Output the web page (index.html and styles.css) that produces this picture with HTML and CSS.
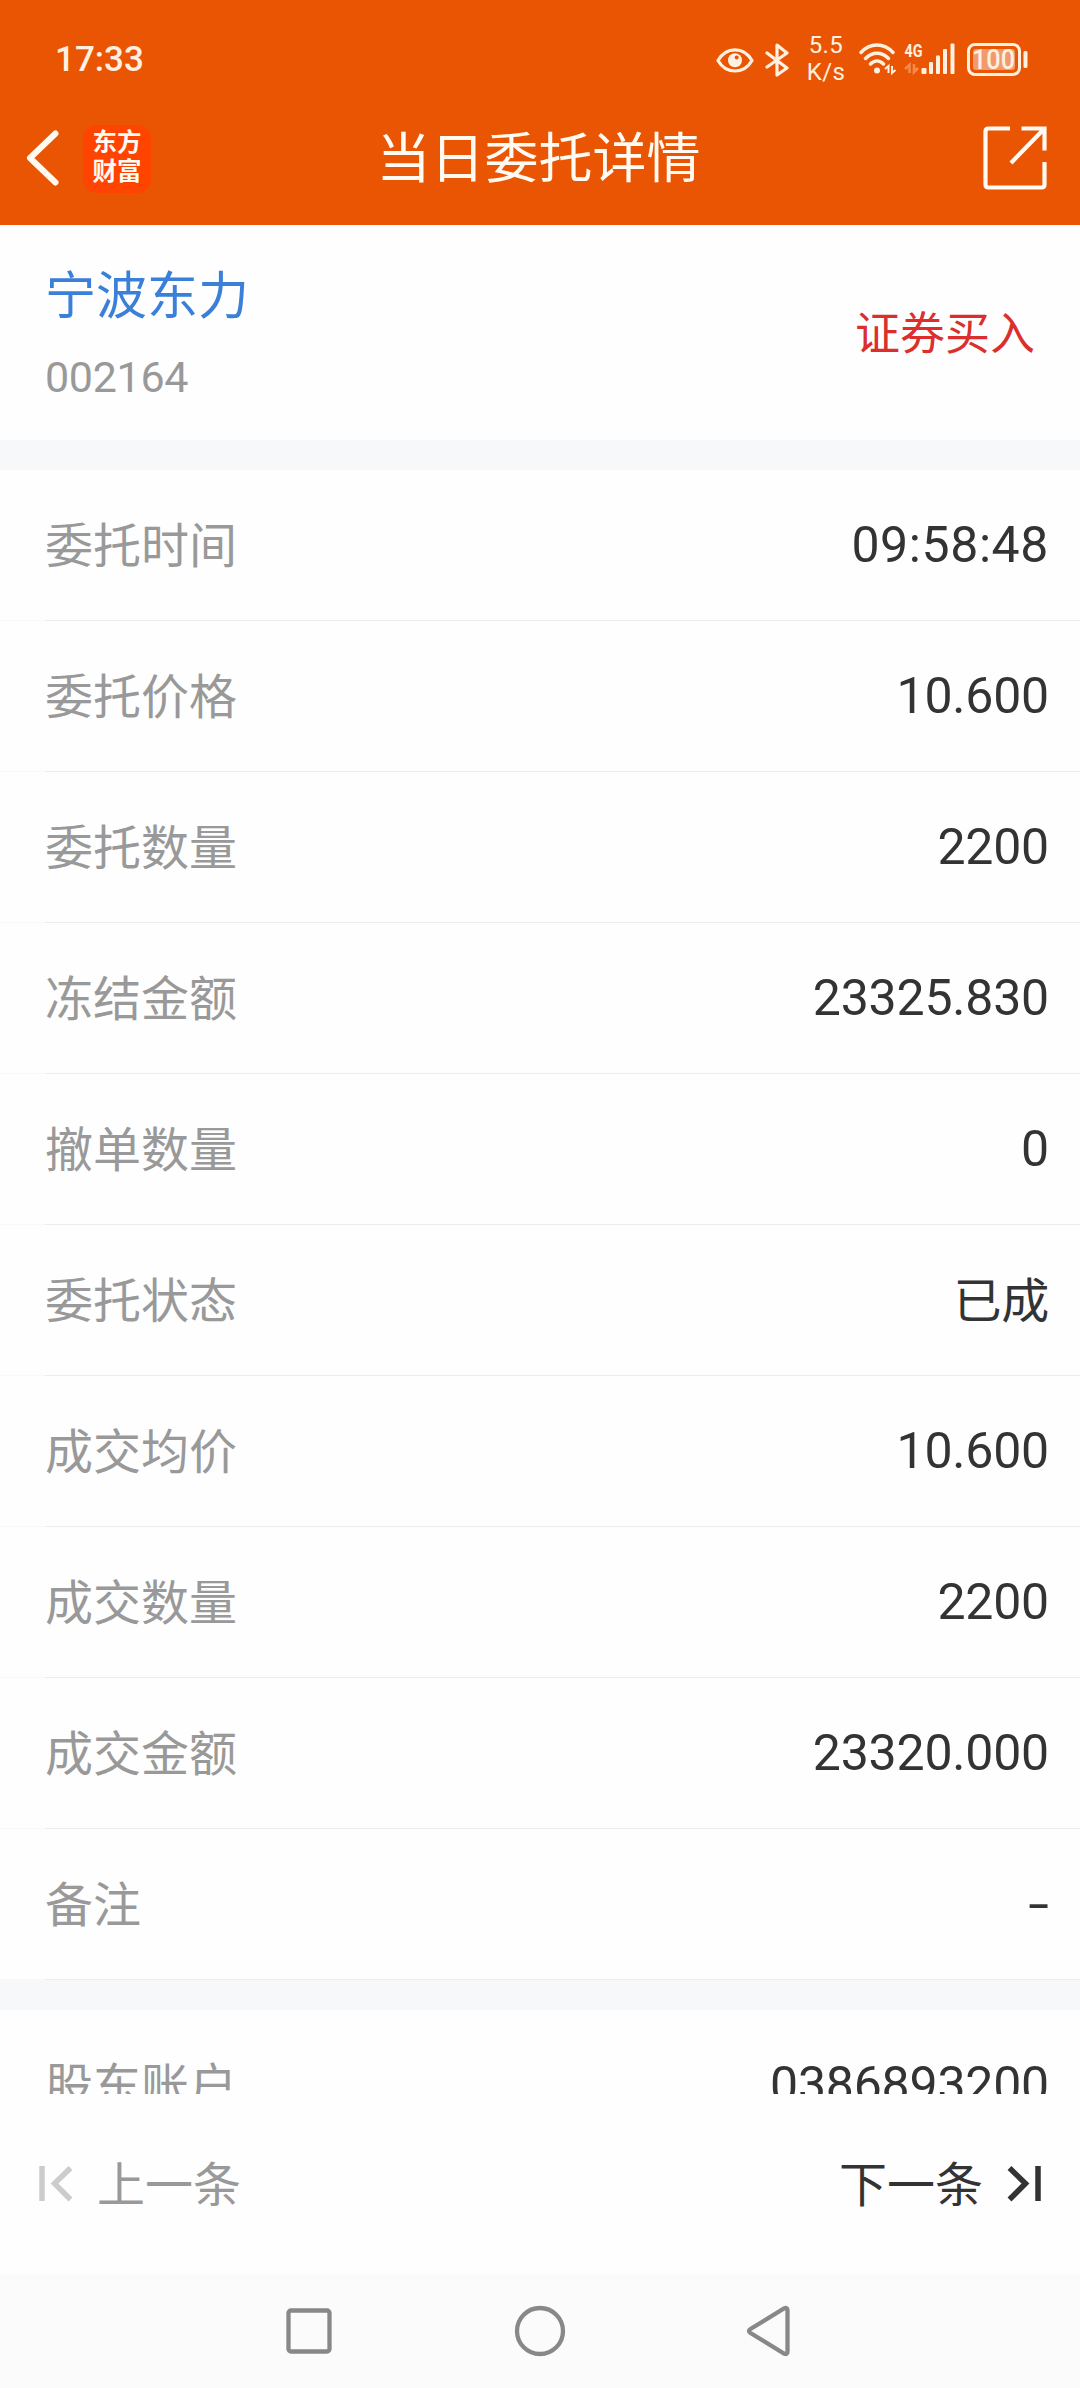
FILE: index.html
```html
<!DOCTYPE html>
<html lang="zh-CN">
<head>
  <meta charset="UTF-8">
  <meta name="viewport" content="width=device-width, initial-scale=1.0">
  <title>当日委托详情</title>
  <link rel="stylesheet" href="styles.css">
</head>
<body>
  <header class="header">
    <div class="status-bar">
      <span class="clock">17:33</span>
      <div class="status-icons">
        <svg class="icon-eye" width="38" height="40" viewBox="0 0 38 40" fill="none" stroke="#fff0e0" stroke-width="3.2">
          <path d="M2 21.500C6 14.500 12 10.800 19 10.800S32 14.500 36 21.500C32 28.500 26 32 19 32S6 28.500 2 21.500Z"/>
          <circle cx="19" cy="21.300" r="7" fill="#fff0e0" stroke="none"/>
          <circle cx="20.700" cy="18.500" r="2" fill="#ea5504" stroke="none"/>
        </svg>
        <svg class="icon-bt" width="24" height="40" viewBox="0 0 24 40" fill="none" stroke="#fff0e0" stroke-width="3.2" stroke-linejoin="round" stroke-linecap="round">
          <path d="M2 14L22 29L12 36V6L22 14L2 28"/>
        </svg>
        <div class="speed"><span>5.5</span><span>K/s</span></div>
        <svg class="icon-wifi" width="38" height="40" viewBox="0 0 38 40" fill="none" stroke="#fff0e0" stroke-width="3.4" stroke-linecap="round">
          <path d="M2 13.500C11 3.500 25 3.500 34 13.500M6.500 19.500C13 12.500 23 12.500 29.500 19.500M11.500 25C15.500 21 20.500 21 24.500 25"/>
          <circle cx="18" cy="31.500" r="3" fill="#fff0e0" stroke="none"/>
          <path d="M26 30L29.500 27V34M33 27V34L36.500 31" stroke-width="2" stroke-linecap="butt"/>
        </svg>
        <svg class="icon-signal" width="52" height="40" viewBox="0 0 52 40" fill="#fff0e0">
          <text class="net-type" x="0.500" y="17.500" textLength="18" lengthAdjust="spacingAndGlyphs">4G</text>
          <path d="M1 30L5.500 26V34M10 25V33L14 29" fill="none" stroke="#f58a4c" stroke-width="2.600"/>
          <rect x="17.500" y="29" width="5" height="6" rx="1"/>
          <rect x="25" y="23" width="4" height="12" rx="1"/>
          <rect x="32" y="16.500" width="4" height="18.500" rx="1"/>
          <rect x="39" y="10" width="4" height="25" rx="1"/>
          <rect x="46.500" y="4.500" width="4" height="30.500" rx="1"/>
        </svg>
        <svg class="icon-battery" width="61" height="40" viewBox="0 0 61 40">
          <rect x="1.500" y="5.500" width="51" height="30" rx="6.500" fill="none" stroke="#fff0e0" stroke-width="3"/>
          <rect x="6" y="10" width="42" height="21" rx="3" fill="#f29a6c"/>
          <rect x="56.500" y="12" width="4" height="17" rx="1.500" fill="#fff0e0"/>
          <text class="battery-text" x="5" y="30" textLength="43" lengthAdjust="spacingAndGlyphs">100</text>
        </svg>
      </div>
    </div>
    <div class="title-bar">
      <div class="title-left">
        <svg width="36" height="60" viewBox="0 0 36 60" fill="none" stroke="#fffaf2" stroke-width="6" stroke-linecap="round" stroke-linejoin="round">
          <path d="M31.500 4.500L6 29L31.500 53.500"/>
        </svg>
        <div class="logo"><span>东方</span><span>财富</span></div>
      </div>
      <h1 class="title">当日委托详情</h1>
      <svg class="icon-share" width="64" height="64" viewBox="0 0 64 64" fill="none" stroke="#fffaf2" stroke-width="4.200">
        <path d="M27 2.500H5.500Q2.500 2.500 2.500 5.500V58.500Q2.500 61.500 5.500 61.500H58.500Q61.500 61.500 61.500 58.500V36M38.500 2.500H61.500V24.500M61 3L28 37"/>
      </svg>
    </div>
  </header>

  <main class="content">
    <section class="stock">
      <div>
        <div class="stock-name">宁波东力</div>
        <div class="stock-code">002164</div>
      </div>
      <span class="trade-type">证券买入</span>
    </section>

    <ul class="list">
      <li class="row"><span class="label">委托时间</span><span class="value time">09:58:48</span></li>
      <li class="row"><span class="label">委托价格</span><span class="value">10.600</span></li>
      <li class="row"><span class="label">委托数量</span><span class="value">2200</span></li>
      <li class="row"><span class="label">冻结金额</span><span class="value">23325.830</span></li>
      <li class="row"><span class="label">撤单数量</span><span class="value">0</span></li>
      <li class="row"><span class="label">委托状态</span><span class="value text">已成</span></li>
      <li class="row"><span class="label">成交均价</span><span class="value">10.600</span></li>
      <li class="row"><span class="label">成交数量</span><span class="value">2200</span></li>
      <li class="row"><span class="label">成交金额</span><span class="value">23320.000</span></li>
      <li class="row"><span class="label">备注</span><span class="value dash">-</span></li>
    </ul>

    <ul class="list">
      <li class="row"><span class="label">股东账户</span><span class="value">0386893200</span></li>
    </ul>
  </main>

  <div class="pager">
    <div class="pager-btn prev">
      <svg width="34" height="36" viewBox="0 0 34 36" fill="none" stroke="#ccc" stroke-width="6">
        <path d="M3 0V35M31.500 2L15.500 17.500L31.500 33.500" stroke-width="5.500"/>
      </svg>
      <span class="pager-text">上一条</span>
    </div>
    <div class="pager-btn next">
      <span class="pager-text">下一条</span>
      <svg width="34" height="36" viewBox="0 0 34 36" fill="none" stroke="#333" stroke-width="5.500">
        <path d="M31 0V35M2.500 2L18.500 17.500L2.500 33.500"/>
      </svg>
    </div>
  </div>

  <nav class="nav-bar">
    <svg width="52" height="52" viewBox="0 0 52 52"><rect x="5.500" y="5.500" width="41" height="41" rx="2.500"/></svg>
    <svg width="52" height="52" viewBox="0 0 52 52"><circle cx="26" cy="26" r="23"/></svg>
    <svg width="52" height="52" viewBox="0 0 52 52"><path d="M4 26Q4 25 5.500 24L39 3.500Q42.500 2 42.500 5V47Q42.500 50 39 48.500L5.500 28Q4 27 4 26Z"/></svg>
  </nav>
</body>
</html>
```

FILE: styles.css
```css
* {
  box-sizing: border-box;
}

body {
  margin: 0;
  height: 2388px;
  display: flex;
  flex-direction: column;
  overflow: hidden;
  background-color: #fefefe;
  font-family: Roboto, "Noto Sans CJK SC", sans-serif;
  color: #333;
}

svg {
  display: block;
  flex: none;
}

.header {
  height: 225px;
  flex: none;
  background-color: #ea5504;
  color: #fffaf2;
}

.status-bar {
  height: 92px;
  padding: 26px 52px 0 55px;
  display: flex;
  justify-content: space-between;
  align-items: center;
  color: #fff0e0;
}

.clock {
  font-size: 35px;
  font-weight: 500;
}

.status-icons {
  display: flex;
  align-items: center;
}

.icon-bt {
  margin-left: 11px;
}

.speed {
  width: 40px;
  margin: 0 13px 0 17px;
  display: flex;
  flex-direction: column;
  text-align: center;
  font-size: 24px;
  line-height: 27px;
  letter-spacing: 0.4px;
}

.icon-signal {
  margin-left: 7px;
}

.net-type {
  font-size: 18px;
  font-weight: 700;
}

.icon-battery {
  margin-left: 11px;
}

.battery-text {
  font-size: 27px;
  font-weight: 500;
  fill: #fff0e0;
}

.title-bar {
  height: 133px;
  padding: 0 33px 0 24px;
  display: grid;
  grid-template-columns: 1fr auto 1fr;
  align-items: center;
}

.title-left {
  display: flex;
  align-items: center;
  gap: 23px;
  margin-right: 8px;
}

.logo {
  width: 68px;
  height: 68px;
  padding-top: 3px;
  border-radius: 14px;
  background-color: #ff4400;
  display: flex;
  flex-direction: column;
  align-items: center;
  font-size: 24.500px;
  font-weight: 700;
  line-height: 29px;
}

.title {
  margin: 0 0 0 6px;
  padding-top: 3px;
  font-size: 54px;
  font-weight: 400;
  line-height: 80px;
}

.icon-share {
  justify-self: end;
  margin-bottom: 2px;
}

.content {
  height: 1869px;
  flex: none;
  overflow: hidden;
}

.stock {
  height: 215px;
  padding: 0 45px;
  display: flex;
  justify-content: space-between;
  align-items: center;
}

.stock-name {
  padding-top: 9px;
  font-size: 51px;
  line-height: 80px;
  color: #3a7fd8;
}

.stock-code {
  font-size: 43px;
  line-height: 80px;
  letter-spacing: -0.300px;
  color: #999;
}

.trade-type {
  padding-bottom: 4px;
  font-size: 45px;
  color: #db2f2d;
}

.list {
  margin: 0;
  padding: 0;
  list-style: none;
  border-top: 30px solid #f7f8fa;
}

.row {
  height: 151px;
  padding: 0 31px 1px 45px;
  display: flex;
  justify-content: space-between;
  align-items: center;
  background: linear-gradient(to right, #f8f8f8 45px, #ececec 45px) bottom / 100% 1px no-repeat;
}

.label {
  padding-bottom: 6px;
  font-size: 48px;
  color: #999;
}

.value {
  font-size: 50px;
  letter-spacing: -0.200px;
}

.time {
  letter-spacing: 0.600px;
}

.text {
  padding-bottom: 6px;
  font-size: 48px;
}

.dash {
  transform: scaleX(1.5);
  transform-origin: right;
}

.pager {
  height: 180px;
  flex: none;
  padding: 0 39px;
  display: flex;
  justify-content: space-between;
  align-items: center;
  font-size: 48px;
}

.pager-btn {
  display: flex;
  align-items: center;
  gap: 24px;
}

.pager-text {
  padding-bottom: 6px;
}

.prev {
  color: #999;
}

.nav-bar {
  height: 114px;
  flex: none;
  display: flex;
  justify-content: center;
  align-items: center;
  gap: 179px;
  background-color: #fbfbfb;
}

.nav-bar svg {
  fill: none;
  stroke: #888;
  stroke-width: 4.300px;
}
```
